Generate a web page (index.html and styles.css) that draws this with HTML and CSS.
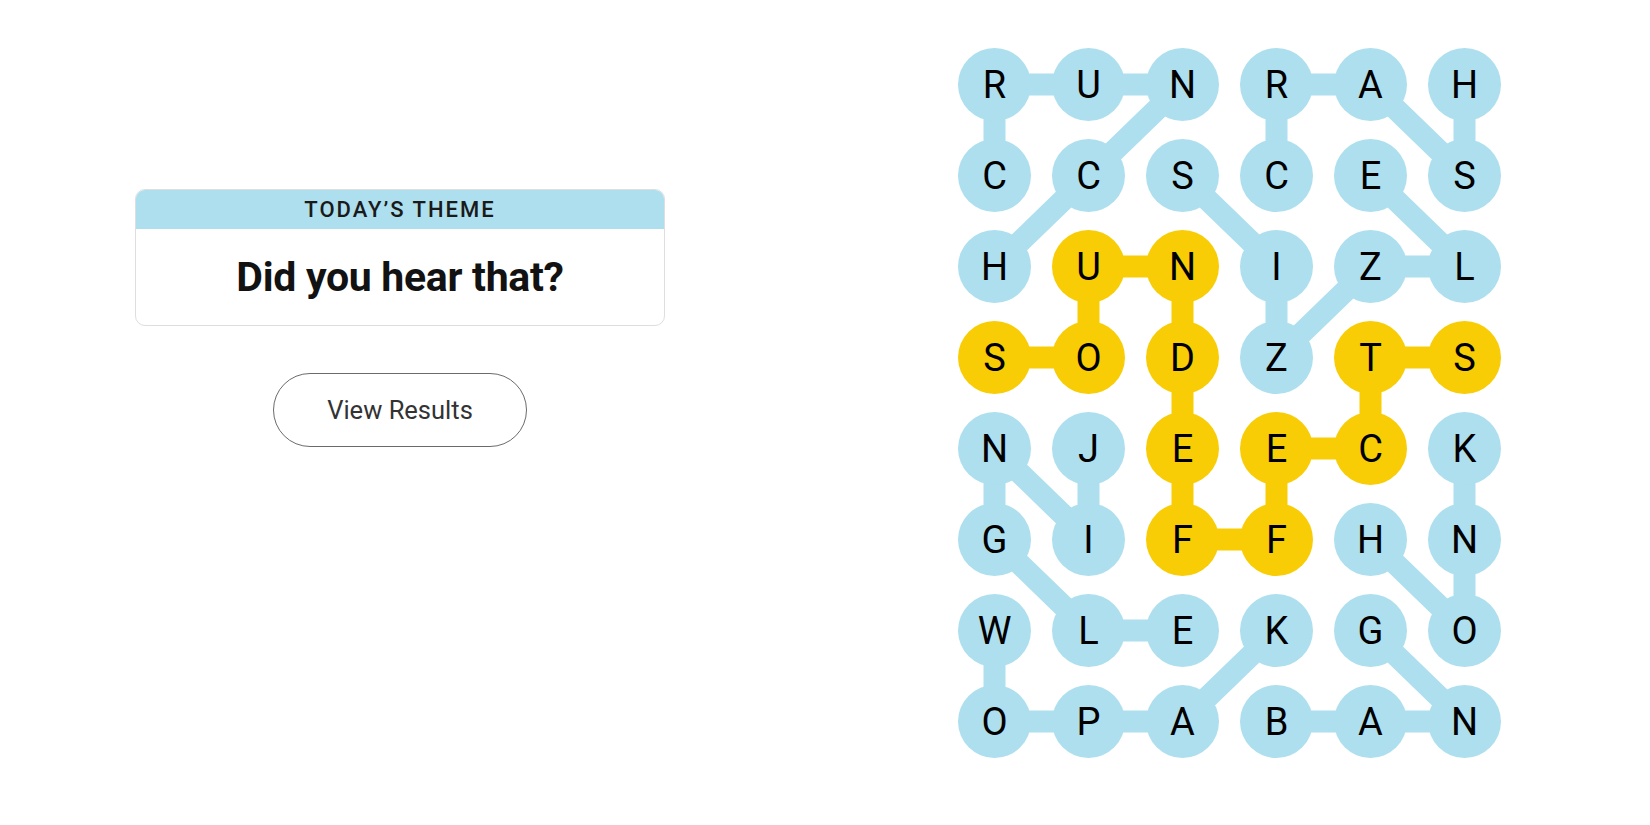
FILE: index.html
```html
<!DOCTYPE html>
<html lang="en">
<head>
    <meta charset="UTF-8">
    <title>Strands</title>
    <meta name="viewport" content="width=device-width, initial-scale=1.0">
    <link rel="stylesheet" href="styles.css">
</head>
<body>
    <main class="game">
        <section class="sidebar">
            <div class="theme-card">
                <div class="theme-label">Today’s Theme</div>
                <div class="theme-text">Did you hear that?</div>
            </div>
            <button class="results-btn">View Results</button>
        </section>

        <section class="board">
            <svg class="paths" viewBox="0 0 543 710" width="543" height="710">
                <g class="found-path">
                    <polyline points="36.5,127.5 36.5,36.5 130.5,36.5 224.5,36.5 130.5,127.5 36.5,218.5"/>
                    <polyline points="318.5,127.5 318.5,36.5 412.5,36.5 506.5,127.5 506.5,36.5"/>
                    <polyline points="224.5,127.5 318.5,218.5 318.5,309.5 412.5,218.5 506.5,218.5 412.5,127.5"/>
                    <polyline points="130.5,400.5 130.5,491.5 36.5,400.5 36.5,491.5 130.5,582.5 224.5,582.5"/>
                    <polyline points="412.5,491.5 506.5,582.5 506.5,491.5 506.5,400.5"/>
                    <polyline points="318.5,582.5 224.5,673.5 130.5,673.5 36.5,673.5 36.5,582.5"/>
                    <polyline points="318.5,673.5 412.5,673.5 506.5,673.5 412.5,582.5"/>
                </g>
                <g class="spangram-path">
                    <polyline points="36.5,309.5 130.5,309.5 130.5,218.5 224.5,218.5 224.5,309.5 224.5,400.5 224.5,491.5 318.5,491.5 318.5,400.5 412.5,400.5 412.5,309.5 506.5,309.5"/>
                </g>
            </svg>
            <div class="grid">
                <div class="cell found">R</div>
                <div class="cell found">U</div>
                <div class="cell found">N</div>
                <div class="cell found">R</div>
                <div class="cell found">A</div>
                <div class="cell found">H</div>

                <div class="cell found">C</div>
                <div class="cell found">C</div>
                <div class="cell found">S</div>
                <div class="cell found">C</div>
                <div class="cell found">E</div>
                <div class="cell found">S</div>

                <div class="cell found">H</div>
                <div class="cell spangram">U</div>
                <div class="cell spangram">N</div>
                <div class="cell found">I</div>
                <div class="cell found">Z</div>
                <div class="cell found">L</div>

                <div class="cell spangram">S</div>
                <div class="cell spangram">O</div>
                <div class="cell spangram">D</div>
                <div class="cell found">Z</div>
                <div class="cell spangram">T</div>
                <div class="cell spangram">S</div>

                <div class="cell found">N</div>
                <div class="cell found">J</div>
                <div class="cell spangram">E</div>
                <div class="cell spangram">E</div>
                <div class="cell spangram">C</div>
                <div class="cell found">K</div>

                <div class="cell found">G</div>
                <div class="cell found">I</div>
                <div class="cell spangram">F</div>
                <div class="cell spangram">F</div>
                <div class="cell found">H</div>
                <div class="cell found">N</div>

                <div class="cell found">W</div>
                <div class="cell found">L</div>
                <div class="cell found">E</div>
                <div class="cell found">K</div>
                <div class="cell found">G</div>
                <div class="cell found">O</div>

                <div class="cell found">O</div>
                <div class="cell found">P</div>
                <div class="cell found">A</div>
                <div class="cell found">B</div>
                <div class="cell found">A</div>
                <div class="cell found">N</div>
            </div>
        </section>
    </main>
</body>
</html>
```

FILE: styles.css
```css
body { margin: 0; background: #fff; color: #121212; font-family: Roboto, "Liberation Sans", sans-serif; }
.game { display: flex; align-items: flex-start; padding: 48px 0 0 135px; gap: 293px; }

.sidebar { width: 530px; margin-top: 141px; display: flex; flex-direction: column; align-items: center; }
.theme-card { width: 100%; box-sizing: border-box; border: 1px solid #dedede; border-radius: 10px; overflow: hidden; text-align: center; }
.theme-label { background: #aedfee; height: 39px; line-height: 40px; font-size: 22px; font-weight: 500; letter-spacing: 2px; text-transform: uppercase; color: #1a1a1a; }
.theme-text { height: 96px; line-height: 96px; font-size: 41px; font-weight: 700; letter-spacing: -0.3px; color: #121212; }
.results-btn { margin-top: 47px; width: 254px; height: 74px; border: 1px solid #6b6b6b; border-radius: 37px; background: #fff; color: #333; font-family: inherit; font-size: 25.5px; cursor: pointer; }

.board { position: relative; width: 543px; height: 710px; }
.paths { position: absolute; top: 0; left: 0; }
.paths polyline { fill: none; stroke-width: 22; stroke-linecap: round; stroke-linejoin: round; }
.found-path polyline { stroke: #aedfee; }
.spangram-path polyline { stroke: #f8cd05; }
.grid { position: relative; display: grid; grid-template-columns: repeat(6, 73px); grid-auto-rows: 73px; column-gap: 21px; row-gap: 18px; }
.cell { border-radius: 50%; display: flex; align-items: center; justify-content: center; font-size: 38px; color: #000; }
.cell.found { background: #aedfee; }
.cell.spangram { background: #f8cd05; }
```
